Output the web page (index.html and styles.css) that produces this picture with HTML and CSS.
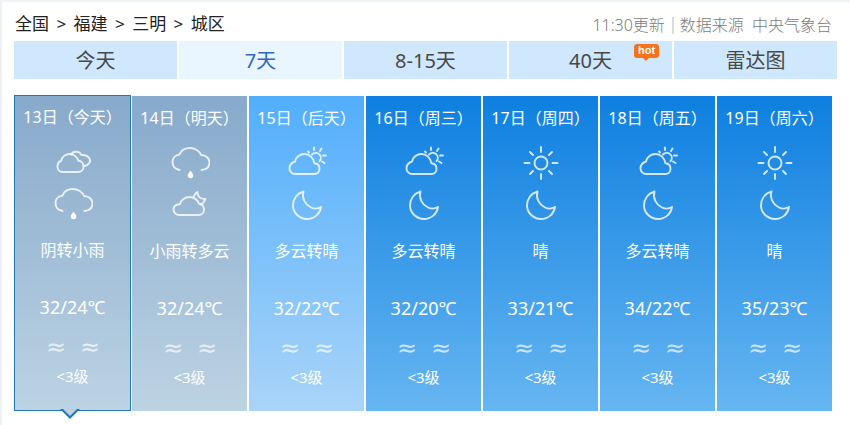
FILE: index.html
```html
<!DOCTYPE html>
<html lang="zh">
<head>
<meta charset="utf-8">
<title>城区天气</title>
<link rel="stylesheet" href="styles.css">
</head>
<body>
<svg class="defs" width="0" height="0" aria-hidden="true">
  <defs>
    <g id="overcast"><path d="M9.500 30h15.500c3.500 0 5.500-2.500 5.500-5.500 0-3-2-5.500-5-5.700C24 15 20.500 12 17 12c-4.500 0-8 3-9 7-2.500.7-3.500 3-3.500 5.500 0 3 2 5.500 5 5.500z"/><path d="M18.500 12.500C19 10.500 21 9.500 24 9.800c2 .2 3.500 1.500 4.500 3.200 3-.2 6.500 1 8 3.500 1.800 3-.5 6.500-5 7.500"/></g>
    <g id="rain"><path d="M9.500 27C5 26 2.500 23 2.500 19c0-4 3-7 7-7.500C11 7.500 15 5 20 5c5 0 9.500 3 11 7 5 0 8.500 3.500 8.500 7.500 0 4-3 7-8 7.500"/><path class="fill" d="M20.500 27.500c1.800 2.500 2.800 3.800 2.800 5a2.800 2.800 0 0 1-5.600 0c0-1.200 1-2.500 2.800-5z"/></g>
    <g id="cloudmoon"><path d="M9 30h19.500c3.500 0 5.500-2.500 5.500-5.500 0-3-2-5.500-5-5.700C28 15 24 12 19.500 12c-4.500 0-8.500 3-9.500 7C6 19.500 3.500 21.500 3.500 24.500c0 3 2.500 5.500 5.500 5.500z"/><path d="M23.500 12.500C24 10 25.500 8 27.500 7 27 11 30 14.500 35.500 14c-1 2.800-2.500 4.500-4.500 5.500"/></g>
    <g id="partly"><path d="M8 31h19.500c3 0 5-2.200 5-5.200 0-3-2-5.200-5-5.500C26.500 15 22.500 11 17.500 11c-4.500 0-8.500 3-9.500 7.500C5 19.500 2.500 22 2.500 25.500c0 3 2.500 5.500 5.500 5.500z"/><path d="M25 11.500a5 5 0 1 1 7.500 6.700"/><path d="M21 8.500l1 1M27 4.500v2.500M34.500 5.500l-1.500 2.500M39 12.500h-3M37.500 20l-2.500-1.500"/></g>
    <g id="moon"><path d="M16.500 6.500C10 8.500 6 14 6 20.500 6 28 12.500 34 20 34c7 0 13-5 14-12-3 1.800-6.500 2.200-10 .5C18 19.500 14.500 13 16.500 6.500z"/></g>
    <g id="sun"><circle cx="20" cy="20" r="6.500"/><path d="M20 4v5M20 31v5M3.500 20h5M31.500 20h5M9 9l3 3M28 28l3 3M9 31l3-3M28 12l3-3"/></g>
  </defs>
</svg>
<main class="page">
  <header class="topbar">
    <nav class="crumbs"><a>全国</a> &gt; <a>福建</a> &gt; <a>三明</a> &gt; <a>城区</a></nav>
    <p class="meta"><span>11:30更新</span><i class="sep"></i><span>数据来源 中央气象台</span></p>
  </header>
  <ul class="tabs">
    <li class="tab">今天</li>
    <li class="tab tab-on">7天</li>
    <li class="tab">8-15天</li>
    <li class="tab tab-hot">40天<span class="hot">hot</span></li>
    <li class="tab">雷达图</li>
  </ul>
  <ul class="days">
    <li class="day past selected">
      <h3>13日（今天）</h3>
      <svg class="ic" viewBox="0 0 40 40"><use href="#overcast"/></svg>
      <svg class="ic" viewBox="0 0 40 40"><use href="#rain"/></svg>
      <p class="wea">阴转小雨</p>
      <p class="tem">32/24℃</p>
      <p class="wave"><span>≈</span><span>≈</span></p>
      <p class="win">&lt;3级</p>
    </li>
    <li class="day past">
      <h3>14日（明天）</h3>
      <svg class="ic" viewBox="0 0 40 40"><use href="#rain"/></svg>
      <svg class="ic" viewBox="0 0 40 40"><use href="#cloudmoon"/></svg>
      <p class="wea">小雨转多云</p>
      <p class="tem">32/24℃</p>
      <p class="wave"><span>≈</span><span>≈</span></p>
      <p class="win">&lt;3级</p>
    </li>
    <li class="day light">
      <h3>15日（后天）</h3>
      <svg class="ic" viewBox="0 0 40 40"><use href="#partly"/></svg>
      <svg class="ic" viewBox="0 0 40 40"><use href="#moon"/></svg>
      <p class="wea">多云转晴</p>
      <p class="tem">32/22℃</p>
      <p class="wave"><span>≈</span><span>≈</span></p>
      <p class="win">&lt;3级</p>
    </li>
    <li class="day">
      <h3>16日（周三）</h3>
      <svg class="ic" viewBox="0 0 40 40"><use href="#partly"/></svg>
      <svg class="ic" viewBox="0 0 40 40"><use href="#moon"/></svg>
      <p class="wea">多云转晴</p>
      <p class="tem">32/20℃</p>
      <p class="wave"><span>≈</span><span>≈</span></p>
      <p class="win">&lt;3级</p>
    </li>
    <li class="day">
      <h3>17日（周四）</h3>
      <svg class="ic" viewBox="0 0 40 40"><use href="#sun"/></svg>
      <svg class="ic" viewBox="0 0 40 40"><use href="#moon"/></svg>
      <p class="wea">晴</p>
      <p class="tem">33/21℃</p>
      <p class="wave"><span>≈</span><span>≈</span></p>
      <p class="win">&lt;3级</p>
    </li>
    <li class="day">
      <h3>18日（周五）</h3>
      <svg class="ic" viewBox="0 0 40 40"><use href="#partly"/></svg>
      <svg class="ic" viewBox="0 0 40 40"><use href="#moon"/></svg>
      <p class="wea">多云转晴</p>
      <p class="tem">34/22℃</p>
      <p class="wave"><span>≈</span><span>≈</span></p>
      <p class="win">&lt;3级</p>
    </li>
    <li class="day">
      <h3>19日（周六）</h3>
      <svg class="ic" viewBox="0 0 40 40"><use href="#sun"/></svg>
      <svg class="ic" viewBox="0 0 40 40"><use href="#moon"/></svg>
      <p class="wea">晴</p>
      <p class="tem">35/23℃</p>
      <p class="wave"><span>≈</span><span>≈</span></p>
      <p class="win">&lt;3级</p>
    </li>
  </ul>
</main>
</body>
</html>
```
FILE: styles.css
```css
* { box-sizing: border-box; margin: 0; padding: 0; }
html, body { height: 100%; }
body {
  background: #eef3f8;
  font-family: "Noto Sans", "Noto Sans CJK SC", sans-serif;
  padding: 2px 0 0 2px;
  overflow: hidden;
}
ul { list-style: none; }
.defs { position: absolute; }
.page {
  background: #fff;
  height: 423px;
  padding: 0 12px;
}
.topbar {
  height: 39px;
  display: flex;
  justify-content: space-between;
  align-items: flex-start;
  padding: 10px 6px 0 1px;
}
.crumbs { font-size: 17px; line-height: 24px; color: #222; word-spacing: 3px; }
.crumbs a { color: #222; }
.meta {
  font-size: 16px;
  font-weight: 300;
  line-height: 24px;
  color: #7c7c7c;
  display: flex;
  align-items: center;
  margin-top: 1px;
  word-spacing: 4px;
}
.sep { width: 2px; height: 17px; background: #dcdcdc; margin: 0 6px 0 7px; }
.tabs { display: flex; gap: 2px; }
.tab {
  width: 163px;
  height: 38px;
  background: #cfe8fd;
  color: #484848;
  font-size: 20px;
  line-height: 40px;
  text-align: center;
  position: relative;
}
.tab-on { background: #e9f5ff; color: #3068c0; }
.hot {
  position: absolute;
  top: 3px;
  right: 13px;
  width: 25px;
  height: 14px;
  background: #f6731c;
  border-radius: 3px;
  color: #fff;
  font: bold 11px/13px "Liberation Sans", sans-serif;
}
.hot::after {
  content: "";
  position: absolute;
  left: 9px;
  top: 14px;
  border: 3px solid transparent;
  border-top-color: #f6731c;
  border-bottom: 0;
}
.days { display: flex; gap: 2px; margin-top: 17px; }
.day {
  width: 115px;
  height: 315px;
  color: #fff;
  text-align: center;
  background: linear-gradient(#0e7fe0, #66b6f1);
  position: relative;
  display: flex;
  flex-direction: column;
  align-items: center;
}
.light { background: linear-gradient(#52aefc, #a9d4f8); }
.past { background: linear-gradient(#87a9cb, #bcd3e3); }
.selected {
  width: 117px;
  height: 316px;
  margin-top: -1px;
  margin-right: -1px;
  border: 1px solid #2079b4;
}
.selected::before {
  content: "";
  position: absolute;
  left: 45px;
  bottom: -9px;
  width: 0;
  height: 0;
  border: 10px solid transparent;
  border-top-color: #2079b4;
  border-bottom: 0;
}
.selected::after {
  content: "";
  position: absolute;
  left: 47px;
  bottom: -6px;
  width: 0;
  height: 0;
  border: 8px solid transparent;
  border-top-color: #bcd3e3;
  border-bottom: 0;
}
.selected h3 { margin-top: 10px; }
h3 { font-size: 16px; font-weight: 400; line-height: 22px; margin-top: 11px; white-space: nowrap; }
.ic {
  display: block;
  width: 40px;
  height: 40px;
  fill: none;
  stroke: rgba(255, 255, 255, .8);
  stroke-width: 1.9;
  stroke-linecap: round;
  stroke-linejoin: round;
  margin-top: 2px;
}
h3 + .ic { margin-top: 14px; }
.fill { fill: #fff; stroke: none; }
.wea { font-size: 16px; line-height: 24px; margin-top: 14px; white-space: nowrap; }
.tem { font-size: 18px; line-height: 26px; margin-top: 32px; white-space: nowrap; }
.wave {
  display: flex;
  gap: 15px;
  font: 24px/26px "DejaVu Sans", sans-serif;
  color: rgba(255, 255, 255, .7);
  margin-top: 14px;
}
.wave span { width: 19px; }
.win { font-size: 15px; line-height: 20px; margin-top: 6px; }
```
